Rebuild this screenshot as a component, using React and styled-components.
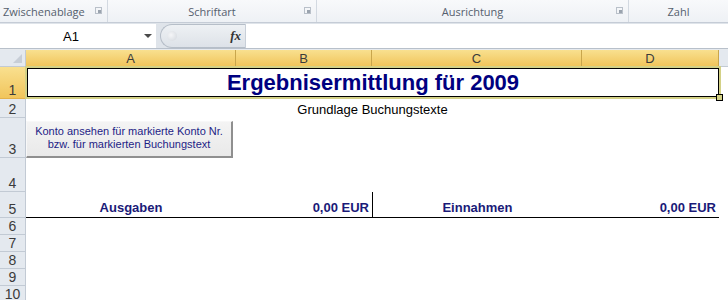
import React from "react";
import styled, { createGlobalStyle } from "styled-components";

const GlobalStyle = createGlobalStyle`
  body {
    margin: 0;
    background: #ffffff;
    font-family: "Liberation Sans", Arial, sans-serif;
  }
`;

const COLS = [26, 210, 136, 210, 137, 9];
const ROWS = [17, 32, 19, 40, 34, 26, 17, 17, 17, 17, 17];

const Window = styled.div`
  width: 728px;
  height: 300px;
  overflow: hidden;
  display: flex;
  flex-direction: column;
  background: #ffffff;
  & > * {
    flex-shrink: 0;
  }
`;

const Ribbon = styled.div`
  height: 22px;
  display: flex;
  background: linear-gradient(#f8f9fb, #eef1f5);
  border-bottom: 1px solid #c5ccd6;
`;

const Group = styled.div`
  width: ${(p) => (p.$w ? `${p.$w}px` : "auto")};
  flex: ${(p) => (p.$w ? "none" : 1)};
  display: flex;
  align-items: center;
  justify-content: ${(p) => (p.$left ? "flex-start" : "center")};
  position: relative;
  padding-left: ${(p) => (p.$left ? "3px" : "0")};
  border-right: ${(p) => (p.$last ? "none" : "1px solid #d3d9e1")};
  font-family: "Open Sans", "DejaVu Sans", sans-serif;
  font-size: 11px;
  color: #55606e;
  box-sizing: border-box;
`;

const Launcher = styled.span`
  position: absolute;
  right: 5px;
  top: 7px;
  width: 7px;
  height: 7px;
  border: 1px solid #b9c0c9;
  box-sizing: border-box;
  &::after {
    content: "";
    position: absolute;
    right: 0;
    bottom: 0;
    width: 3px;
    height: 3px;
    background: #9aa3ae;
  }
`;

const FormulaBar = styled.div`
  height: 24px;
  display: flex;
  background: #dfe4ea;
  padding-top: 1px;
  border-bottom: 1px solid #b8c0ca;
`;

const NameBox = styled.div`
  width: 156px;
  background: #ffffff;
  display: flex;
  align-items: center;
  position: relative;
  font-size: 13px;
  color: #000;
  padding-left: 63px;
  box-sizing: border-box;
  margin-right: 4px;
`;

const Caret = styled.span`
  position: absolute;
  right: 4px;
  top: 10px;
  width: 0;
  height: 0;
  border-left: 4px solid transparent;
  border-right: 4px solid transparent;
  border-top: 4px solid #4a4a4a;
`;

const FxBox = styled.div`
  width: 85px;
  display: flex;
  align-items: center;
  justify-content: space-between;
  padding: 0 4px 0 6px;
  box-sizing: border-box;
  border-radius: 12px 0 0 12px;
  border: 1px solid #b6bec8;
  border-right: none;
  background: linear-gradient(#eef1f4, #dde2e8);
`;

const Dot = styled.span`
  width: 10px;
  height: 10px;
  border-radius: 50%;
  background: radial-gradient(circle at 40% 40%, #f5f6f8, #d2d7dd);
`;

const Fx = styled.span`
  font-family: "Liberation Serif", serif;
  font-style: italic;
  font-weight: bold;
  font-size: 13px;
  color: #333;
`;

const FormulaInput = styled.div`
  flex: 1;
  background: #ffffff;
  border-left: 1px solid #c8cfd8;
`;

const Strip = styled.div`
  height: 1px;
  background: #e6eaef;
`;

const Sheet = styled.div`
  position: relative;
  display: grid;
  grid-template-columns: ${COLS.map((c) => `${c}px`).join(" ")};
  grid-template-rows: ${ROWS.map((r) => `${r}px`).join(" ")};
`;

const Corner = styled.div`
  background: #e4e9ef;
  border-right: 1px solid #c2cad4;
  border-bottom: 1px solid #c2cad4;
  box-sizing: border-box;
  position: relative;
  &::after {
    content: "";
    position: absolute;
    right: 3px;
    bottom: 3px;
    border-left: 9px solid transparent;
    border-bottom: 9px solid #c7ced7;
  }
`;

const ColHead = styled.div`
  display: flex;
  align-items: center;
  justify-content: center;
  font-size: 13px;
  color: #3b3b3b;
  box-sizing: border-box;
  border-right: 1px solid ${(p) => (p.$sel ? "#c9a64c" : "#c2cad4")};
  border-bottom: 1px solid ${(p) => (p.$sel ? "#e4b14b" : "#c2cad4")};
  background: ${(p) =>
    p.$sel ? "linear-gradient(#f9e08f, #f1c55c)" : "#e4e9ef"};
`;

const RowHead = styled.div`
  grid-column: 1;
  display: flex;
  align-items: flex-end;
  justify-content: center;
  font-size: 14px;
  line-height: 16px;
  color: #3b3b3b;
  box-sizing: border-box;
  border-right: 1px solid #c2cad4;
  border-bottom: 1px solid ${(p) => (p.$sel ? "#e4b14b" : "#c2cad4")};
  background: ${(p) =>
    p.$sel ? "linear-gradient(#f9e08f, #f1c55c)" : "#e4e9ef"};
`;

const TitleCell = styled.div`
  grid-column: 2 / 6;
  grid-row: 2;
  display: flex;
  align-items: center;
  justify-content: center;
  box-sizing: border-box;
  border: 1px solid #000;
  box-shadow: 0 0 0 2px #d3d186;
  margin: 1px 0 2px 1px;
  font-size: 22px;
  font-weight: bold;
  color: #000080;
  position: relative;
`;

const FillHandle = styled.span`
  position: absolute;
  right: -5px;
  bottom: -5px;
  width: 5px;
  height: 5px;
  background: #d3d186;
  border: 1px solid #000;
`;

const SubCell = styled.div`
  grid-column: 2 / 6;
  grid-row: 3;
  display: flex;
  align-items: flex-end;
  justify-content: center;
  font-size: 13px;
  color: #000;
  padding-bottom: 1px;
`;

const ButtonCell = styled.div`
  grid-column: 2;
  grid-row: 4;
  padding-top: 3px;
`;

const SheetButton = styled.div`
  width: 207px;
  height: 37px;
  box-sizing: border-box;
  display: flex;
  align-items: center;
  justify-content: center;
  text-align: center;
  font-size: 11px;
  line-height: 13px;
  color: #1d1d86;
  background: linear-gradient(#f4f4f4, #e9e9e9);
  border-top: 1px solid #f8f8f8;
  border-left: 1px solid #f8f8f8;
  border-right: 2px solid #8f8f8f;
  border-bottom: 2px solid #8f8f8f;
  padding-bottom: 2px;
`;

const SumCell = styled.div`
  grid-row: 6;
  grid-column: ${(p) => p.$col};
  display: flex;
  align-items: flex-end;
  justify-content: ${(p) => (p.$right ? "flex-end" : "center")};
  padding: 0 ${(p) => (p.$right ? "3px" : "0")} 2px 0;
  font-size: 13px;
  font-weight: bold;
  color: #1a1a78;
  border-bottom: 1px solid #000;
  border-left: ${(p) => (p.$divider ? "1px solid #000" : "none")};
  box-sizing: border-box;
`;

const Edge = styled.div`
  grid-column: 6;
  grid-row: ${(p) => p.$row};
  background: ${(p) => (p.$head ? "#e4e9ef" : "#ffffff")};
  border-bottom: ${(p) => (p.$head ? "1px solid #c2cad4" : "none")};
`;

const columns = ["A", "B", "C", "D"];

const App = () => {
  return (
    <>
      <GlobalStyle />
      <Window>
        <Ribbon>
          <Group $w={108} $left>
            Zwischenablage
            <Launcher />
          </Group>
          <Group $w={209}>
            Schriftart
            <Launcher />
          </Group>
          <Group $w={312}>
            Ausrichtung
            <Launcher />
          </Group>
          <Group $last>Zahl</Group>
        </Ribbon>
        <FormulaBar>
          <NameBox>
            A1
            <Caret />
          </NameBox>
          <FxBox>
            <Dot />
            <Fx>fx</Fx>
          </FxBox>
          <FormulaInput />
        </FormulaBar>
        <Strip />
        <Sheet>
          <Corner />
          {columns.map((c) => (
            <ColHead key={c} $sel>
              {c}
            </ColHead>
          ))}
          <Edge $row={1} $head />
          {ROWS.slice(1).map((_, i) => (
            <RowHead key={i} $sel={i === 0} style={{ gridRow: i + 2 }}>
              {i + 1}
            </RowHead>
          ))}
          <TitleCell>
            Ergebnisermittlung für 2009
            <FillHandle />
          </TitleCell>
          <SubCell>Grundlage Buchungstexte</SubCell>
          <ButtonCell>
            <SheetButton>
              Konto ansehen für markierte Konto Nr.
              <br />
              bzw. für markierten Buchungstext
            </SheetButton>
          </ButtonCell>
          <SumCell $col={2}>Ausgaben</SumCell>
          <SumCell $col={3} $right>
            0,00 EUR
          </SumCell>
          <SumCell $col={4} $divider>
            Einnahmen
          </SumCell>
          <SumCell $col={5} $right>
            0,00 EUR
          </SumCell>
        </Sheet>
      </Window>
    </>
  );
};

export default App;
